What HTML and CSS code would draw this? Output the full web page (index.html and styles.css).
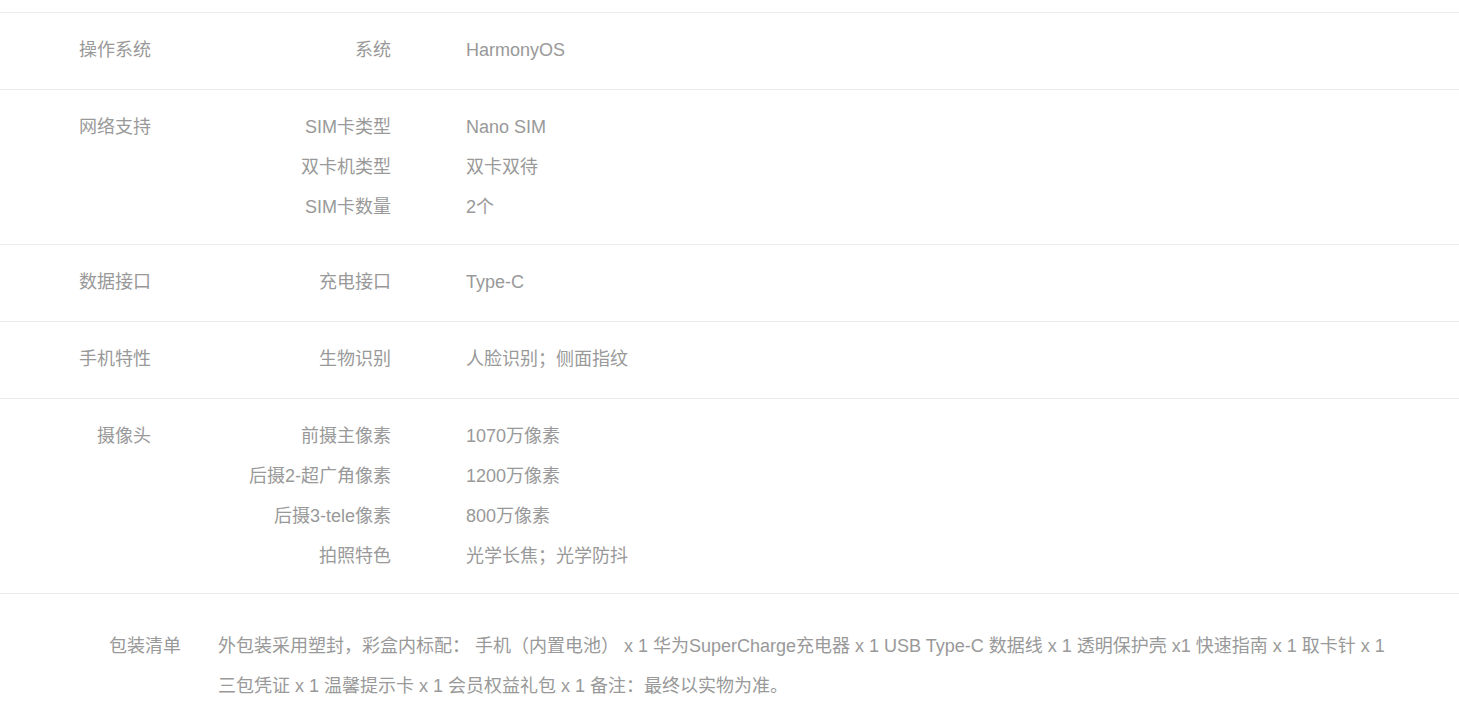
FILE: index.html
```html
<!DOCTYPE html>
<html lang="zh-CN">
<head>
  <meta charset="UTF-8">
  <meta name="viewport" content="width=device-width, initial-scale=1.0">
  <title>规格参数</title>
  <link rel="stylesheet" href="styles.css">
</head>
<body>
  <div class="specs">
    <div class="spec-row">
      <div class="spec-name">操作系统</div>
      <dl class="spec-list">
        <div class="spec-item"><dt>系统</dt><dd>HarmonyOS</dd></div>
      </dl>
    </div>
    <div class="spec-row">
      <div class="spec-name">网络支持</div>
      <dl class="spec-list">
        <div class="spec-item"><dt>SIM卡类型</dt><dd>Nano SIM</dd></div>
        <div class="spec-item"><dt>双卡机类型</dt><dd>双卡双待</dd></div>
        <div class="spec-item"><dt>SIM卡数量</dt><dd>2个</dd></div>
      </dl>
    </div>
    <div class="spec-row">
      <div class="spec-name">数据接口</div>
      <dl class="spec-list">
        <div class="spec-item"><dt>充电接口</dt><dd>Type-C</dd></div>
      </dl>
    </div>
    <div class="spec-row">
      <div class="spec-name">手机特性</div>
      <dl class="spec-list">
        <div class="spec-item"><dt>生物识别</dt><dd>人脸识别；侧面指纹</dd></div>
      </dl>
    </div>
    <div class="spec-row">
      <div class="spec-name">摄像头</div>
      <dl class="spec-list">
        <div class="spec-item"><dt>前摄主像素</dt><dd>1070万像素</dd></div>
        <div class="spec-item"><dt>后摄2-超广角像素</dt><dd>1200万像素</dd></div>
        <div class="spec-item"><dt>后摄3-tele像素</dt><dd>800万像素</dd></div>
        <div class="spec-item"><dt>拍照特色</dt><dd>光学长焦；光学防抖</dd></div>
      </dl>
    </div>
    <div class="package">
      <div class="package-name">包装清单</div>
      <p class="package-text">外包装采用塑封，彩盒内标配： 手机（内置电池） x 1 华为SuperCharge充电器 x 1 USB Type-C 数据线 x 1 透明保护壳 x1 快速指南 x 1 取卡针 x 1 三包凭证 x 1 温馨提示卡 x 1 会员权益礼包 x 1 备注：最终以实物为准。</p>
    </div>
  </div>
</body>
</html>
```

FILE: styles.css
```css
body {
  margin: 0;
  padding: 0;
  background: #fff;
  color: #999;
  font-family: "Liberation Sans", "Noto Sans CJK SC", sans-serif;
  font-size: 18px;
}

.specs {
  margin-top: 12px;
}

.spec-row {
  display: flex;
  box-sizing: border-box;
  min-height: 77px; /* 单行也保持同样高度 */
  border-top: 1px solid #ebebeb;
  padding: 17px 0;
  line-height: 40px;
}

.spec-name {
  width: 151px;
  text-align: right;
  flex-shrink: 0;
}

.spec-list {
  margin: 0;
}

.spec-item {
  display: flex;
}

.spec-item dt {
  width: 240px;
  text-align: right;
}

.spec-item dd {
  margin: 0 0 0 75px;
}

.package {
  display: flex;
  border-top: 1px solid #ebebeb;
  padding: 32px 60px 20px 0;
  line-height: 40px;
}

.package-name {
  width: 181px;
  text-align: right;
  flex-shrink: 0;
}

.package-text {
  margin: 0 0 0 37px;
}
```
